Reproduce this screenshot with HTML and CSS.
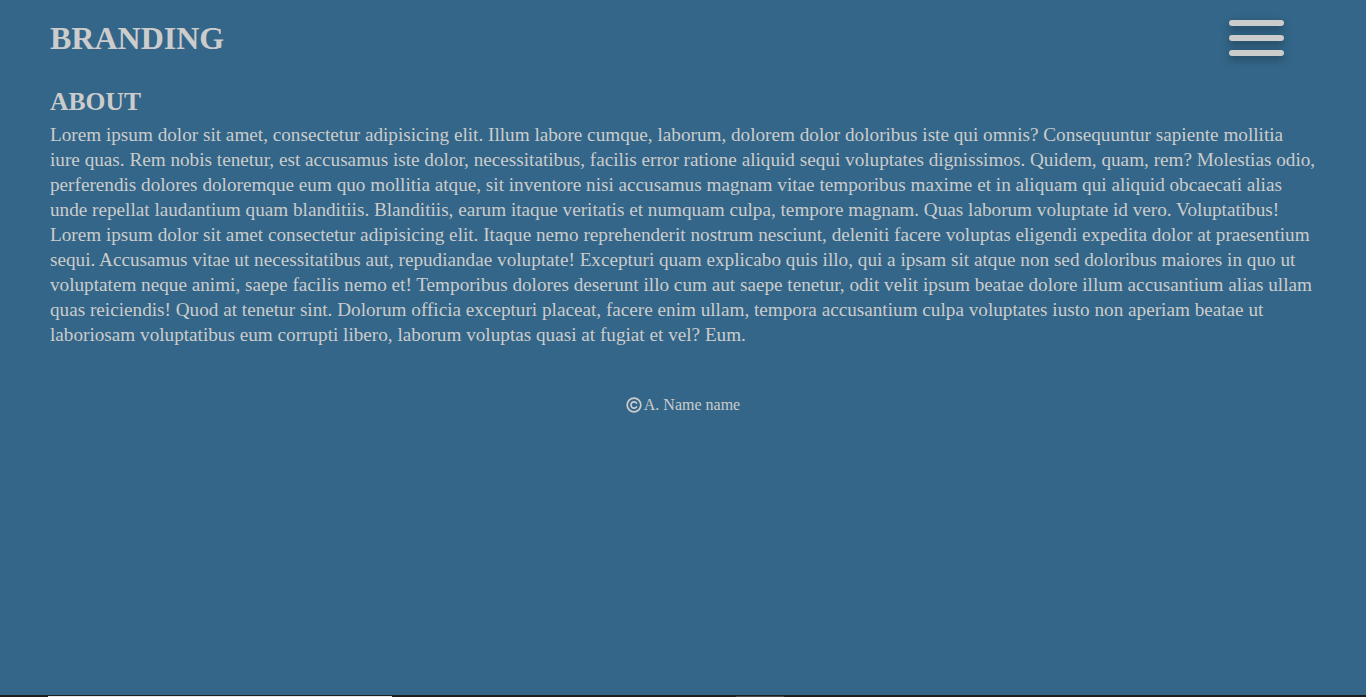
FILE: index.html
```html
<!DOCTYPE html>
<html lang="en">
<head>
<meta charset="utf-8">
<title>Branding</title>
<link rel="stylesheet" href="styles.css">
</head>
<body>
<div class="page">
  <header class="header">
    <h1 class="brand">BRANDING</h1>
    <button class="menu" aria-label="Menu">
      <span class="bar"></span>
      <span class="bar"></span>
      <span class="bar"></span>
    </button>
  </header>
  <main class="about">
    <h2 class="about-title">ABOUT</h2>
    <p class="about-text">Lorem ipsum dolor sit amet, consectetur adipisicing elit. Illum labore cumque, laborum, dolorem dolor doloribus iste qui omnis? Consequuntur sapiente mollitia iure quas. Rem nobis tenetur, est accusamus iste dolor, necessitatibus, facilis error ratione aliquid sequi voluptates dignissimos. Quidem, quam, rem? Molestias odio, perferendis dolores doloremque eum quo mollitia atque, sit inventore nisi accusamus magnam vitae temporibus maxime et in aliquam qui aliquid obcaecati alias unde repellat laudantium quam blanditiis. Blanditiis, earum itaque veritatis et numquam culpa, tempore magnam. Quas laborum voluptate id vero. Voluptatibus! Lorem ipsum dolor sit amet consectetur adipisicing elit. Itaque nemo reprehenderit nostrum nesciunt, deleniti facere voluptas eligendi expedita dolor at praesentium sequi. Accusamus vitae ut necessitatibus aut, repudiandae voluptate! Excepturi quam explicabo quis illo, qui a ipsam sit atque non sed doloribus maiores in quo ut voluptatem neque animi, saepe facilis nemo et! Temporibus dolores deserunt illo cum aut saepe tenetur, odit velit ipsum beatae dolore illum accusantium alias ullam quas reiciendis! Quod at tenetur sint. Dolorum officia excepturi placeat, facere enim ullam, tempora accusantium culpa voluptates iusto non aperiam beatae ut laboriosam voluptatibus eum corrupti libero, laborum voluptas quasi at fugiat et vel? Eum.</p>
  </main>
  <footer class="footer">
    <svg class="copy" viewBox="0 0 16 16" width="16" height="16" aria-hidden="true">
      <circle cx="8" cy="8" r="6.8" fill="none" stroke="#cccccc" stroke-width="1.7"/>
      <path d="M10.5 6.1 A3.1 3.1 0 1 0 10.5 9.9" fill="none" stroke="#cccccc" stroke-width="1.7" stroke-linecap="round"/>
    </svg>
    <span>A. Name name</span>
  </footer>
</div>
<section class="gallery">
  <div class="tile tile-light"></div>
  <div class="tile tile-gap"></div>
  <div class="tile tile-grey"></div>
</section>
</body>
</html>
```
FILE: styles.css
```css
html, body {
  margin: 0;
  padding: 0;
}
body {
  background: #336688;
  color: #cccccc;
  font-family: "Liberation Serif", "Times New Roman", serif;
}
.page {
  min-height: 695px;
  padding: 0 50px;
  box-sizing: border-box;
}
.header {
  display: flex;
  justify-content: space-between;
  align-items: flex-start;
  padding-top: 20px;
}
.brand {
  margin: 0;
  font-size: 32px;
  font-weight: bold;
  line-height: 36px;
}
.menu {
  display: flex;
  flex-direction: column;
  gap: 9px;
  padding: 0;
  margin: 0 32px 0 0;
  border: 0;
  background: transparent;
  cursor: pointer;
}
.bar {
  display: block;
  width: 55px;
  height: 6px;
  border-radius: 3px;
  background: #cccccc;
  box-shadow: 0 3px 8px rgba(0, 0, 0, 0.35);
}
.about {
  padding-top: 31px;
}
.about-title {
  margin: 0;
  font-size: 25.6px;
  font-weight: bold;
  line-height: 29px;
}
.about-text {
  margin: 6px 0 0;
  font-size: 19.2px;
  line-height: 25px;
}
.footer {
  display: flex;
  justify-content: center;
  align-items: center;
  gap: 2px;
  margin-top: 49px;
  font-size: 16px;
  line-height: 18px;
}
.copy {
  display: block;
}
.gallery {
  display: flex;
  background: #1e1e1e;
  height: 300px;
  padding: 0 48px;
  border-top: 1px solid #1e1e1e;
  box-sizing: border-box;
}
.tile {
  height: 200px;
}
.tile-light {
  width: 344px;
  background: #e6e6e6;
}
.tile-gap {
  width: 344px;
}
.tile-grey {
  width: 48px;
  background: #4a4a4a;
}
```
